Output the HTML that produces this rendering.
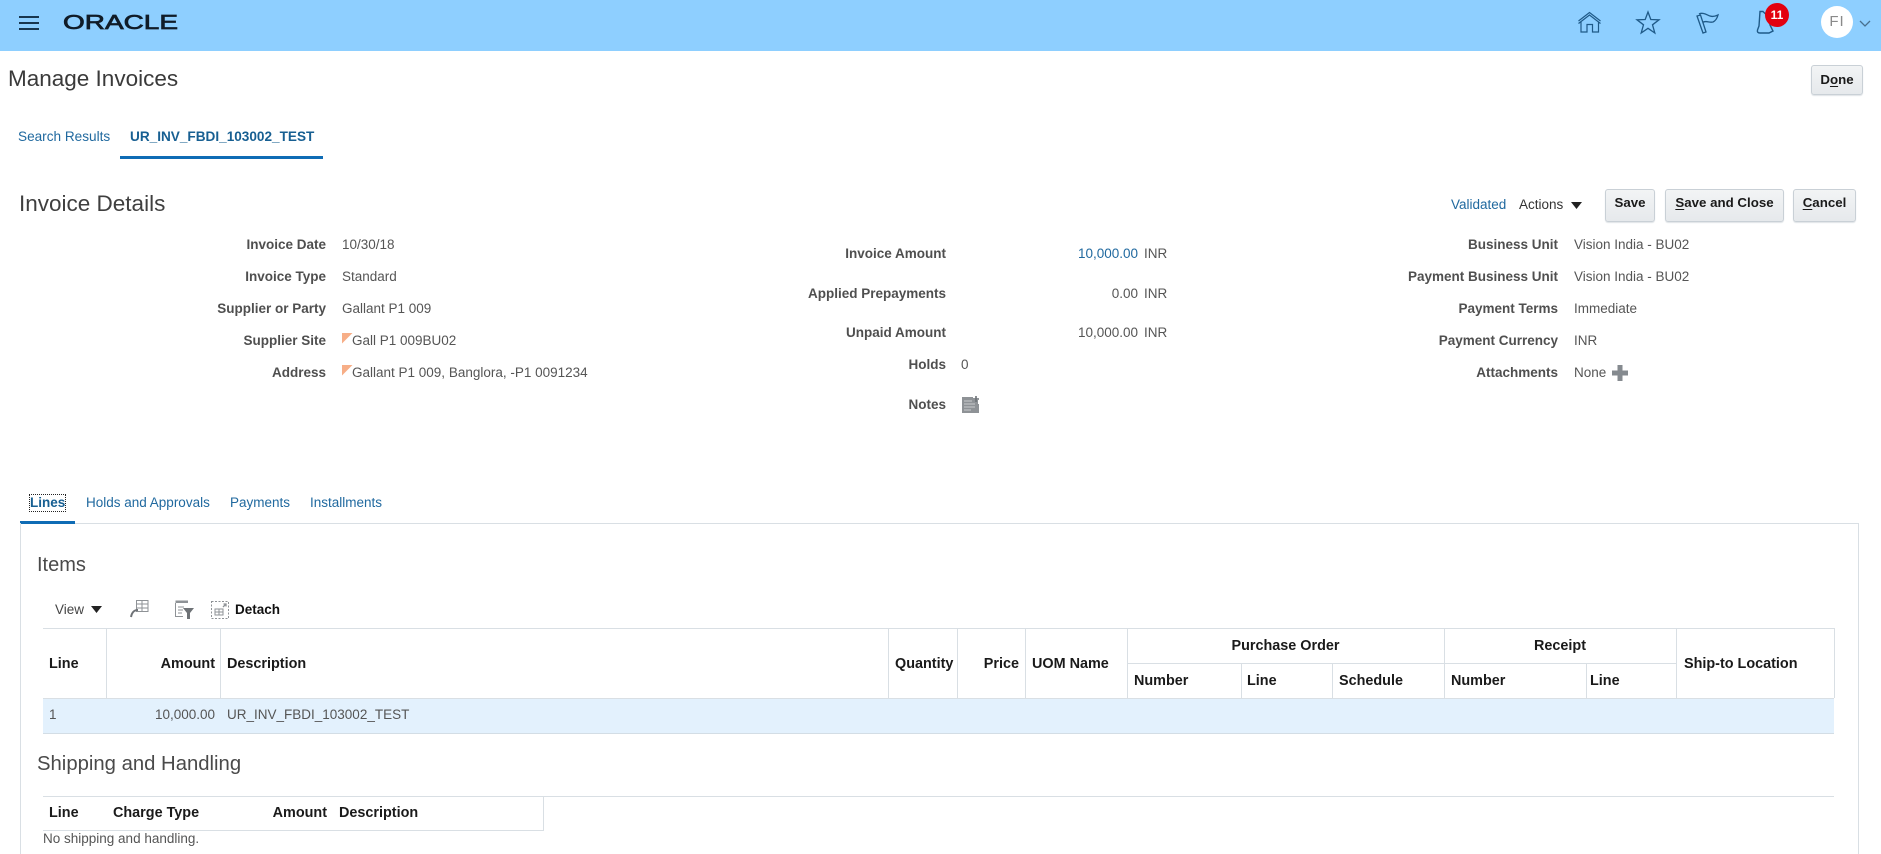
<!DOCTYPE html>
<html lang="en">
<head>
<meta charset="utf-8">
<title>Manage Invoices</title>
<style>
html,body{margin:0;padding:0;background:#fff}
body{width:1881px;height:854px;position:relative;overflow:hidden;font-family:"Liberation Sans",Arial,sans-serif;font-size:13.5px;color:#555}
.t{position:absolute;white-space:nowrap;height:20px;line-height:20px}
.r{text-align:right}
.l{font-weight:bold;color:#4f4f4f}
.h{font-weight:bold;color:#1a1a1a;font-size:14.4px}
.a{color:#20699f}
.b{position:absolute;box-sizing:border-box;border:1px solid #c9d0d6;border-radius:3px;background:linear-gradient(#f2f4f5,#e6e9ec);font-weight:bold;font-size:13.3px;color:#1a1a1a;text-align:center;line-height:27px;box-shadow:0 1px 1px #dfe3e6}
.v{position:absolute;width:1px;background:#d9dfe4}
.x{position:absolute;height:1px;background:#d9dfe4}
u{text-underline-offset:2px}
svg{position:absolute;overflow:visible}
</style>
</head>
<body>
<div style="position:absolute;left:0;top:0;width:1881px;height:51px;background:#8ecfff"></div>
<div style="position:absolute;left:19px;top:16px;width:20px;height:2px;background:#17364f"></div>
<div style="position:absolute;left:19px;top:22px;width:20px;height:2px;background:#17364f"></div>
<div style="position:absolute;left:19px;top:28px;width:20px;height:2px;background:#17364f"></div>
<svg style="left:63px;top:13px" width="116" height="18"><text x="0" y="16" font-family="Liberation Sans" font-size="20" fill="#101c28" stroke="#101c28" stroke-width="0.7" textLength="115" lengthAdjust="spacingAndGlyphs">ORACLE</text></svg>

<svg style="left:1578px;top:11px" width="24" height="22" fill="none" stroke="#1f5a88" stroke-width="1.2"><path d="M0.5 10 L11.5 1.5 L22.5 10 M0.5 12.5 L11.5 4 L22.5 12.5 M3 11 V21 H9 V13.5 H14.5 V21 H20.5 V11"/></svg>
<svg style="left:1636px;top:11px" width="24" height="23" fill="none" stroke="#1f5a88" stroke-width="1.3"><path d="M12 1 L14.8 8.5 L23 8.8 L16.5 13.8 L18.8 22 L12 17.3 L5.2 22 L7.5 13.8 L1 8.8 L9.2 8.5 Z"/></svg>
<svg style="left:1696px;top:11px" width="24" height="24" fill="none" stroke="#1f5a88" stroke-width="1.3"><path d="M1 5 L7 22 L10 21 L4.5 4 Z M3 3 C7 1 11 4 14 5 C17 6 20 5 22 4 C21 8 19 10 17 11 C13 12 10 9 6.5 11.5"/></svg>
<svg style="left:1756px;top:9px" width="20" height="26" fill="none" stroke="#1f5a88" stroke-width="1.4"><path d="M4 2.5 H7 C9 5 12 6 13 9 L14 16 L17 22 L13 24 H4 C2 24 1 23 1.5 21 L3 17 Z M8 24 L11 24"/></svg>
<div style="position:absolute;left:1765px;top:3px;width:24px;height:24px;border-radius:50%;background:#e3000f;color:#fff;font-weight:bold;font-size:12px;line-height:24px;text-align:center">11</div>
<div style="position:absolute;left:1821px;top:6px;width:32px;height:32px;border-radius:50%;background:#fff;color:#8a8a8a;font-size:15px;line-height:32px;text-align:center;letter-spacing:1px">FI</div>
<svg style="left:1859px;top:20px" width="12" height="8" fill="none" stroke="#48708f" stroke-width="1.3"><path d="M1 1 L6 6 L11 1"/></svg>

<div class="t" style="left:8px;top:65px;height:28px;line-height:28px;font-size:22.5px;color:#3a3a3a">Manage Invoices</div>
<div class="b" style="left:1811px;top:65px;width:52px;height:30px">D<u>o</u>ne</div>

<div class="t a" style="left:18px;top:127px;font-size:13.6px">Search Results</div>
<div class="t" style="left:130px;top:127px;font-weight:bold;color:#175f92;font-size:13.6px">UR_INV_FBDI_103002_TEST</div>
<div style="position:absolute;left:120px;top:156px;width:203px;height:3px;background:#0f6cb5"></div>

<div class="t" style="left:19px;top:190px;height:28px;line-height:28px;font-size:22.5px;color:#3f3f3f">Invoice Details</div>
<div class="t a" style="left:1451px;top:195px">Validated</div>
<div class="t" style="left:1519px;top:195px;color:#333">Actions</div>
<svg style="left:1571px;top:202px" width="11" height="7"><path d="M0 0 H11 L5.5 7 Z" fill="#222"/></svg>
<div class="b" style="left:1605px;top:189px;width:50px;height:33px;line-height:26px">Save</div>
<div class="b" style="left:1665px;top:189px;width:119px;height:33px;line-height:26px"><u>S</u>ave and Close</div>
<div class="b" style="left:1793px;top:189px;width:63px;height:33px;line-height:26px"><u>C</u>ancel</div>

<div class="t l r" style="right:1555px;top:235px">Invoice Date</div><div class="t" style="left:342px;top:235px">10/30/18</div>
<div class="t l r" style="right:1555px;top:267px">Invoice Type</div><div class="t" style="left:342px;top:267px">Standard</div>
<div class="t l r" style="right:1555px;top:299px">Supplier or Party</div><div class="t" style="left:342px;top:299px">Gallant P1 009</div>
<div class="t l r" style="right:1555px;top:331px">Supplier Site</div>
<svg style="left:342px;top:333px" width="11" height="11"><path d="M0 0 H10.5 L0 10.5 Z" fill="#f7ae87"/></svg>
<div class="t" style="left:352px;top:331px">Gall P1 009BU02</div>
<div class="t l r" style="right:1555px;top:363px">Address</div>
<svg style="left:342px;top:365px" width="11" height="11"><path d="M0 0 H10.5 L0 10.5 Z" fill="#f7ae87"/></svg>
<div class="t" style="left:352px;top:363px">Gallant P1 009, Banglora, -P1 0091234</div>

<div class="t l r" style="right:935px;top:244px">Invoice Amount</div>
<div class="t a r" style="right:743px;top:244px">10,000.00</div><div class="t" style="left:1144px;top:244px">INR</div>
<div class="t l r" style="right:935px;top:284px">Applied Prepayments</div>
<div class="t r" style="right:743px;top:284px">0.00</div><div class="t" style="left:1144px;top:284px">INR</div>
<div class="t l r" style="right:935px;top:323px">Unpaid Amount</div>
<div class="t r" style="right:743px;top:323px">10,000.00</div><div class="t" style="left:1144px;top:323px">INR</div>
<div class="t l r" style="right:935px;top:355px">Holds</div><div class="t" style="left:961px;top:355px">0</div>
<div class="t l r" style="right:935px;top:395px">Notes</div>
<svg style="left:962px;top:396px" width="18" height="18"><path d="M0 1 H11 V4 H16 V8 H17 V17 H0 Z" fill="#8e9296"/><path d="M2 5 H10 M2 8 H13 M2 11 H13 M2 14 H9" stroke="#c9cccf" stroke-width="1"/><path d="M14 0 V6 M11 3 H17" stroke="#6c7176" stroke-width="1.6"/></svg>

<div class="t l r" style="right:323px;top:235px">Business Unit</div><div class="t" style="left:1574px;top:235px">Vision India - BU02</div>
<div class="t l r" style="right:323px;top:267px">Payment Business Unit</div><div class="t" style="left:1574px;top:267px">Vision India - BU02</div>
<div class="t l r" style="right:323px;top:299px">Payment Terms</div><div class="t" style="left:1574px;top:299px">Immediate</div>
<div class="t l r" style="right:323px;top:331px">Payment Currency</div><div class="t" style="left:1574px;top:331px">INR</div>
<div class="t l r" style="right:323px;top:363px">Attachments</div><div class="t" style="left:1574px;top:363px">None</div>
<svg style="left:1612px;top:365px" width="16" height="16"><path d="M5.5 0 H10.5 V5.5 H16 V10.5 H10.5 V16 H5.5 V10.5 H0 V5.5 H5.5 Z" fill="#858a8f"/></svg>

<div style="position:absolute;left:29px;top:494px;width:35px;height:16px;border:1px dotted #222"></div>
<div class="t" style="left:30px;top:493px;font-weight:bold;color:#175f92">Lines</div>
<div class="t a" style="left:86px;top:493px">Holds and Approvals</div>
<div class="t a" style="left:230px;top:493px">Payments</div>
<div class="t a" style="left:310px;top:493px">Installments</div>
<div class="x" style="left:20px;top:523px;width:1839px"></div>
<div style="position:absolute;left:20px;top:521px;width:55px;height:3px;background:#0f6cb5"></div>
<div class="v" style="left:20px;top:523px;height:331px"></div>
<div class="v" style="left:1858px;top:523px;height:331px"></div>

<div class="t" style="left:37px;top:553px;height:24px;line-height:24px;font-size:20px;color:#4a4a4a">Items</div>
<div class="t" style="left:55px;top:600px;color:#444">View</div>
<svg style="left:91px;top:606px" width="11" height="7"><path d="M0 0 H11 L5.5 7 Z" fill="#222"/></svg>
<svg style="left:130px;top:600px" width="19" height="19" fill="none" stroke="#8e9296" stroke-width="1"><path d="M6.5 0.5 H18 V11.5 H6.5 Z M6.5 4 H18 M6.5 8 H18 M12 0.5 V11.5"/><path d="M1 17 C2 12 4 10 8 10" stroke="#6e7276" stroke-width="2"/></svg>
<svg style="left:175px;top:600px" width="19" height="19" fill="none"><path d="M0.5 0.5 H13 V3 H0.5 Z" fill="#8e9296"/><path d="M0.5 3 V16.5 H8 M3 7 H9 M3 10 H8 M3 13 H7" stroke="#8e9296"/><path d="M8 8 H19 L15 13 V19 H12 V13 Z" fill="#6e7276"/></svg>
<svg style="left:211px;top:601px" width="18" height="18" fill="none" stroke="#8e9296" stroke-width="1"><path d="M0.5 0.5 H17.5 V17.5 H0.5 Z" stroke-dasharray="2 1.5"/><path d="M4 8 H12 V14 H4 Z M4 11 H12 M8 8 V14"/><path d="M12 6 L15 3 M12.5 3 H15 V5.5" stroke-width="1.3"/></svg>
<div class="t" style="left:235px;top:600px;font-weight:bold;color:#111">Detach</div>

<div class="x" style="left:43px;top:628px;width:1791px"></div>
<div class="v" style="left:1834px;top:628px;height:70px"></div>
<div class="v" style="left:106px;top:628px;height:70px"></div>
<div class="v" style="left:220px;top:628px;height:70px"></div>
<div class="v" style="left:888px;top:628px;height:70px"></div>
<div class="v" style="left:957px;top:628px;height:70px"></div>
<div class="v" style="left:1025px;top:628px;height:70px"></div>
<div class="v" style="left:1127px;top:628px;height:70px"></div>
<div class="v" style="left:1241px;top:663px;height:35px"></div>
<div class="v" style="left:1332px;top:663px;height:35px"></div>
<div class="v" style="left:1444px;top:628px;height:70px"></div>
<div class="v" style="left:1586px;top:663px;height:35px"></div>
<div class="v" style="left:1676px;top:628px;height:70px"></div>
<div class="x" style="left:1127px;top:663px;width:549px"></div>
<div class="x" style="left:43px;top:698px;width:1791px"></div>

<div class="t h" style="left:49px;top:654px">Line</div>
<div class="t h r" style="right:1666px;top:654px">Amount</div>
<div class="t h" style="left:227px;top:654px">Description</div>
<div class="t h" style="left:895px;top:654px">Quantity</div>
<div class="t h r" style="right:862px;top:654px">Price</div>
<div class="t h" style="left:1032px;top:654px">UOM Name</div>
<div class="t h" style="left:1127px;width:317px;text-align:center;top:636px">Purchase Order</div>
<div class="t h" style="left:1444px;width:232px;text-align:center;top:636px">Receipt</div>
<div class="t h" style="left:1134px;top:671px">Number</div>
<div class="t h" style="left:1247px;top:671px">Line</div>
<div class="t h" style="left:1339px;top:671px">Schedule</div>
<div class="t h" style="left:1451px;top:671px">Number</div>
<div class="t h" style="left:1590px;top:671px">Line</div>
<div class="t h" style="left:1684px;top:654px">Ship-to Location</div>

<div style="position:absolute;left:43px;top:699px;width:1791px;height:34px;background:#e3f1fd;border-bottom:1px solid #d3dde5"></div>
<div class="t" style="left:49px;top:705px">1</div>
<div class="t r" style="right:1666px;top:705px">10,000.00</div>
<div class="t" style="left:227px;top:705px">UR_INV_FBDI_103002_TEST</div>

<div class="t" style="left:37px;top:752px;height:24px;line-height:24px;font-size:20.3px;color:#4a4a4a">Shipping and Handling</div>
<div class="x" style="left:43px;top:796px;width:1791px"></div>
<div class="v" style="left:543px;top:796px;height:34px"></div>
<div class="x" style="left:43px;top:830px;width:501px"></div>
<div class="t h" style="left:49px;top:803px">Line</div>
<div class="t h" style="left:113px;top:803px">Charge Type</div>
<div class="t h r" style="right:1554px;top:803px">Amount</div>
<div class="t h" style="left:339px;top:803px">Description</div>
<div class="t" style="left:43px;top:829px">No shipping and handling.</div>
</body>
</html>
